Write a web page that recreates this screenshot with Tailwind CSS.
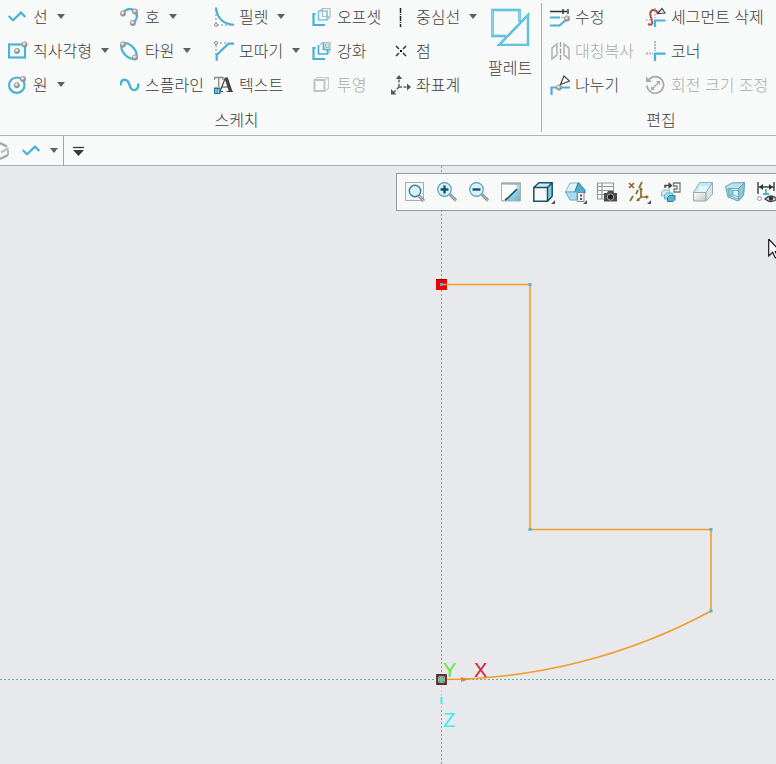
<!DOCTYPE html>
<html lang="ko">
<head>
<meta charset="utf-8">
<title>스케치</title>
<script src="https://cdn.jsdelivr.net/npm/@tailwindcss/browser@4"></script>
</head>
<body class="flex h-screen flex-col overflow-hidden bg-[#e8e9ed] font-['Noto_Sans_CJK_KR',sans-serif] text-[16px] leading-6 font-light text-[#3c3c3c]">
<svg width="0" height="0" class="absolute" aria-hidden="true">
  <defs>
    <radialGradient id="ball" cx=".4" cy=".35"><stop offset="0" stop-color="#fff"/><stop offset="1" stop-color="#8e8e8e"/></radialGradient>
    <linearGradient id="glass" x1="0" y1="0" x2="1" y2="1"><stop offset="0" stop-color="#f0fafd"/><stop offset="1" stop-color="#5fb4d0"/></linearGradient>
    <linearGradient id="gray" x1="0" y1="0" x2="1" y2="1"><stop offset="0" stop-color="#fff"/><stop offset="1" stop-color="#c4c8ca"/></linearGradient>
    <g id="dot"><circle r="2.7" fill="url(#ball)" stroke="#8f8f8f" stroke-width=".6"/></g>
    <g id="more"><path d="M22 18v4h-4z" fill="#555"/></g>
  </defs>
</svg>

<header class="flex shrink-0 border-b border-[#b0b5b8] bg-[#f8faf9]">
  <section class="w-[541px] shrink-0" aria-label="스케치">
    <div class="flex">
      <div class="grid w-[488px] grid-flow-col grid-cols-[112px_94px_98px_79px_97px] grid-rows-[34px_34px_34px] pl-2 whitespace-nowrap [&_span]:pb-0.5">
        <button class="flex items-center gap-[5px]"><svg class="size-5 shrink-0" viewBox="0 0 20 20"><path d="M.7 9 5 13.2 13 5.6 17.4 10" fill="none" stroke="#46b2d6" stroke-width="2.2"/></svg><span>선</span><svg class="ml-1 h-5 w-2 shrink-0" viewBox="0 0 8 20"><path d="M0 7h8l-4 5z" fill="#606060"/></svg></button>
        <button class="flex items-center gap-[5px]"><svg class="size-5 shrink-0" viewBox="0 0 20 20"><rect x="1" y="3.5" width="16" height="13" fill="#f3fafc" stroke="#46b2d6" stroke-width="2.2"/><use href="#dot" x="9" y="10"/><use href="#dot" x="16.5" y="3.5"/></svg><span>직사각형</span><svg class="ml-1 h-5 w-2 shrink-0" viewBox="0 0 8 20"><path d="M0 7h8l-4 5z" fill="#606060"/></svg></button>
        <button class="flex items-center gap-[5px]"><svg class="size-5 shrink-0" viewBox="0 0 20 20"><circle cx="8.8" cy="10.2" r="7.7" fill="none" stroke="#46b2d6" stroke-width="2.2"/><use href="#dot" x="8.8" y="10.2"/><use href="#dot" x="15" y="4"/></svg><span>원</span><svg class="ml-1 h-5 w-2 shrink-0" viewBox="0 0 8 20"><path d="M0 7h8l-4 5z" fill="#606060"/></svg></button>

        <button class="flex items-center gap-[5px]"><svg class="size-5 shrink-0" viewBox="0 0 20 20"><path d="M3 6C6 1.500 12 1 15 4c3.500 4 2 9-2 12" fill="none" stroke="#46b2d6" stroke-width="2.200"/><use href="#dot" x="3" y="6.500"/><use href="#dot" x="15" y="4.500"/><use href="#dot" x="12.800" y="16"/></svg><span>호</span><svg class="ml-1 h-5 w-2 shrink-0" viewBox="0 0 8 20"><path d="M0 7h8l-4 5z" fill="#606060"/></svg></button>
        <button class="flex items-center gap-[5px]"><svg class="size-5 shrink-0" viewBox="0 0 20 20"><ellipse cx="9" cy="10" rx="9.500" ry="5.500" transform="rotate(47 9 10)" fill="none" stroke="#46b2d6" stroke-width="2.200"/><use href="#dot" x="3" y="3.500"/><use href="#dot" x="15" y="16.500"/></svg><span>타원</span><svg class="ml-1 h-5 w-2 shrink-0" viewBox="0 0 8 20"><path d="M0 7h8l-4 5z" fill="#606060"/></svg></button>
        <button class="flex items-center gap-[5px]"><svg class="size-5 shrink-0" viewBox="0 0 20 20"><path d="M.5 10.500C1 3 7.500 3 9.500 10s8.500 7 9-1.500" fill="none" stroke="#46b2d6" stroke-width="2.400"/></svg><span>스플라인</span></button>

        <button class="flex items-center gap-[5px]"><svg class="size-5 shrink-0" viewBox="0 0 20 20"><path d="M2 3v15h16" fill="none" stroke="#888" stroke-dasharray="2 2"/><circle cx="2" cy="18" r="1.500" fill="#fff" stroke="#888"/><path d="M2 .5C3 11 9 17 20 17.800" fill="none" stroke="#46b2d6" stroke-width="2.200"/></svg><span>필렛</span><svg class="ml-1 h-5 w-2 shrink-0" viewBox="0 0 8 20"><path d="M0 7h8l-4 5z" fill="#606060"/></svg></button>
        <button class="flex items-center gap-[5px]"><svg class="size-5 shrink-0" viewBox="0 0 20 20"><path d="M2 14V2h12" fill="none" stroke="#888" stroke-dasharray="2 2"/><circle cx="2" cy="2" r="1.500" fill="#fff" stroke="#888"/><path d="M2.700 19.700V14L14.500 2.700H20" fill="none" stroke="#46b2d6" stroke-width="2.200"/></svg><span>모따기</span><svg class="ml-1 h-5 w-2 shrink-0" viewBox="0 0 8 20"><path d="M0 7h8l-4 5z" fill="#606060"/></svg></button>
        <button class="flex items-center gap-[5px]"><svg class="size-5 shrink-0" viewBox="0 0 20 20"><path d="M.5 5V2.500H9V5M4.700 2.500V12" fill="none" stroke="#888" stroke-width="1.300"/><path d="M6 16.500 11.300 3h2l4.500 13.500M7.500 12h8M4.500 16.500h4.500M12.500 16.500H19" fill="none" stroke="#444" stroke-width="1.200"/><path d="m12 3 4.500 13.500" stroke="#444" stroke-width="3"/><path d="M0 12.500h6.500V19H0z" fill="#1c7899"/><path d="M2 14v4M4.500 14v4M1 15h4.500M1 17h4.500" stroke="#bfe6f2" stroke-width=".7"/></svg><span>텍스트</span></button>

        <button class="flex items-center gap-[5px]"><svg class="size-5 shrink-0" viewBox="0 0 20 20"><path d="M8 4l2.500-2.500H18v8.500l-2.500 2.500M10.500 1.500V9.500H15l3 .5" fill="none" stroke="#b8b8b8" stroke-width="1.200"/><path d="M6.500 4h8.500v9H6.500z" fill="none" stroke="#79cae4" stroke-width="1.700"/><path d="M3.500 7H1.500v11H13" fill="none" stroke="#46b2d6" stroke-width="2.200"/></svg><span>오프셋</span></button>
        <button class="flex items-center gap-[5px]"><svg class="size-5 shrink-0" viewBox="0 0 20 20"><path d="M8 4l2.500-2.500H18v8.500l-2.500 2.500" fill="none" stroke="#b8b8b8" stroke-width="1.200"/><path d="M6.500 4v9h9V8.500h-4V2M11 8.500h7" fill="none" stroke="#46b2d6" stroke-width="1.700"/><path d="M13.500 3H17v3.500h-3.500z" fill="#d5ebf2" stroke="#9abdc9"/><path d="M3.500 7H1.500v11H13" fill="none" stroke="#46b2d6" stroke-width="2.200"/></svg><span>강화</span></button>
        <button disabled class="flex items-center gap-[5px] text-[#aaa]"><svg class="size-5 shrink-0" viewBox="0 0 20 20"><path d="M2.500 5h10v11h-10z" fill="none" stroke="#c2c2c2" stroke-width="2"/><path d="M3 4.500 5.500 2.500h11V13l-3 3M12.500 5l4-2.500" fill="none" stroke="#cecece" stroke-width="1.200"/></svg><span>투영</span></button>

        <button class="flex items-center gap-[5px]"><svg class="size-5 shrink-0" viewBox="0 0 20 20"><path d="M9.500 1v19" stroke="#222" stroke-width="1.500" stroke-dasharray="5 1 1 1"/></svg><span>중심선</span><svg class="ml-1 h-5 w-2 shrink-0" viewBox="0 0 8 20"><path d="M0 7h8l-4 5z" fill="#606060"/></svg></button>
        <button class="flex items-center gap-[5px]"><svg class="size-5 shrink-0" viewBox="0 0 20 20"><path d="m5 5 3 3M15 5l-3 3M5 15l3-3M15 15l-3-3" stroke="#333" stroke-width="1.500"/><path d="M9 9h2v2H9z" fill="#111"/></svg><span>점</span></button>
        <button class="flex items-center gap-[5px]"><svg class="size-5 shrink-0" viewBox="0 0 20 20"><path d="M8 12V3M8 12h9M8 12l-6 6" stroke="#666" stroke-width="1.500" stroke-dasharray="3 1.500"/><path d="M8 0 4.800 4h6.400zM20 12l-4-3.500v7zM0 19.500V14l5.500 5.500z" fill="#555"/></svg><span>좌표계</span></button>
      </div>
      <button class="flex flex-col items-center self-start pt-1.5 leading-[42px] whitespace-nowrap"><svg class="size-10 shrink-0" viewBox="0 0 40 40"><path d="M29.500 16V4H2.500v26H16M38 9v30H9z" fill="none" stroke="#46b2d6" stroke-width="2.400"/><path d="M29.500 16V4H2.500v26H16M38 9v30H9z" fill="none" stroke="#8bdcf1" stroke-width=".8"/></svg><span>팔레트</span></button>
    </div>
    <h2 class="h-[33px] pt-[5px] pr-[68px] text-center font-light">스케치</h2>
  </section>

  <section class="my-[3px] grow border-l border-[#a9adaf]" aria-label="편집">
    <div class="-mt-[3px] grid grid-flow-col grid-cols-[96px_130px] grid-rows-[34px_34px_34px] pl-2 whitespace-nowrap [&_span]:pb-0.5">
      <button class="flex items-center gap-[5px]"><svg class="size-5 shrink-0" viewBox="0 0 20 20"><path d="M0 4.500h17M18 2v5M13 2v5" stroke="#333" stroke-width="1.400"/><path d="M0 10.500h10M0 18.500h9.500l7-6" fill="none" stroke="#46b2d6" stroke-width="2"/><path d="M11 10.500h5" stroke="#999" stroke-dasharray="1.500 1"/><use href="#dot" x="17" y="11.500"/></svg><span>수정</span></button>
      <button disabled class="flex items-center gap-[5px] text-[#aaa]"><svg class="size-5 shrink-0" viewBox="0 0 20 20"><path d="M2 7l5-4v11l-5 4zM19 7l-5-4v11l5 4z" fill="none" stroke="#b8b8b8" stroke-width="1.700"/><path d="M10.500 1v19" stroke="#999" stroke-width="1.300" stroke-dasharray="5 1.500"/></svg><span>대칭복사</span></button>
      <button class="flex items-center gap-[5px]"><svg class="size-5 shrink-0" viewBox="0 0 20 20"><path d="M1.500 20v-7.500H20" fill="none" stroke="#46b2d6" stroke-width="2.200"/><use href="#dot" x="9" y="12.500"/><path d="M10.500 9.500 14 1l5.500 5z" fill="#fff" stroke="#444" stroke-width="1.200"/></svg><span>나누기</span></button>

      <button class="flex items-center gap-[5px]"><svg class="size-5 shrink-0" viewBox="0 0 20 20"><path d="M2 17c4 2 5-1 4-4-2-4-3-9 1-10 3-.5 4 1 5 3" fill="none" stroke="#b64a45" stroke-width="2"/><path d="M0 13h7M9 1v10" stroke="#aaa" stroke-width="1.500" stroke-dasharray="1.500 1.500"/><path d="M9 20v-6.500h10.500" fill="none" stroke="#46b2d6" stroke-width="2.200"/><path d="m11.500 6.500 4.500-5L19 6z" fill="#fff" stroke="#444" stroke-width="1.200"/></svg><span>세그먼트 삭제</span></button>
      <button class="flex items-center gap-[5px]"><svg class="size-5 shrink-0" viewBox="0 0 20 20"><path d="M0 12.500h7M9 0v10" stroke="#b4b4b4" stroke-width="2" stroke-dasharray="2 1"/><path d="M9 20v-7.300h10.500" fill="none" stroke="#46b2d6" stroke-width="2.200"/></svg><span>코너</span></button>
      <button disabled class="flex items-center gap-[5px] text-[#aaa]"><svg class="size-5 shrink-0" viewBox="0 0 20 20"><path d="M3 4.500a8.300 8.300 0 1 1-2 6" fill="none" stroke="#a8a8a8" stroke-width="1.700"/><path d="M0 1.500V7h6zM5 11v4h4zM10 6h4v4z" fill="#a8a8a8"/><path d="m6 14 7-7" stroke="#a8a8a8" stroke-width="1.300"/></svg><span>회전 크기 조정</span></button>
    </div>
    <h2 class="h-[30px] pt-[5px] pl-1 text-center font-light">편집</h2>
  </section>
</header>

<nav class="flex h-[30px] shrink-0 items-stretch border-b border-[#a9b1b5] bg-[#f8faf9]" aria-label="빠른 실행">
  <button class="flex w-[22px] items-center" aria-label="다시 생성"><svg class="size-5" viewBox="0 0 20 20"><path d="M0 2 7 5.500M0 18l8-4" fill="none" stroke="#a5a5a5" stroke-width="2.200"/><path d="M8.500 7 1 11.500" stroke="#c2c2c2" stroke-width="2.500"/><path d="M8 9v5" stroke="#b5b5b5" stroke-width="2"/></svg></button>
  <button class="flex items-center gap-2" aria-label="선"><svg class="size-5" viewBox="0 0 20 20"><path d="M.7 9 5 13.200 13 5.600 17.400 10" fill="none" stroke="#46b2d6" stroke-width="2.200"/></svg><svg class="h-5 w-2" viewBox="0 0 8 20"><path d="M0 7h8l-4 5z" fill="#606060"/></svg></button>
  <button class="ml-[5px] flex items-center border-l border-[#a0a6a9] pl-2" aria-label="도구 모음 사용자 정의"><svg class="h-5 w-3" viewBox="0 0 12 20"><path d="M1 6.500h11" stroke="#3a3a3a" stroke-width="1.300"/><path d="M1 9h11l-5.500 6z" fill="#3a3a3a"/></svg></button>
</nav>

<main class="relative min-h-0 grow overflow-hidden">
  <svg class="size-full" role="img" aria-label="스케치 단면">
    <path d="M441.500 0v2000M0 513.500h4000" stroke="#58b3a2" stroke-dasharray="2 2" fill="none"/>
    <path d="M436 113h11v11h-11z" fill="#f00000"/>
    <path d="M436 113.500h11" stroke="#a40000"/>
    <path d="M441 118.500h89V363.500h181V445A570 570 0 0 1 441 513.500" fill="none" stroke="#f29d2b" stroke-width="1.600"/>
    <path d="M461 511v5l7-2.500z" fill="#e18332"/>
    <path d="M440 117h3v3h-3zM528.500 117h3v3h-3zM528.500 362h3v3h-3zM709.500 362h3v3h-3zM709.500 443.500h3v3h-3z" fill="#4cb8cb"/>
    <path d="M437 509h9v9h-9z" fill="#93aa8d" stroke="#552e37" stroke-width="1.800"/>
    <path d="m438 510 7 7m0-7-7 7" stroke="#bf4148"/>
    <circle cx="441.500" cy="513.500" r="2.500" fill="#69c59c"/>
    <path d="M441.500 520v24" stroke="#6ceced" stroke-dasharray="2 2"/><path d="M441.500 531v7" stroke="#3ce8ef" stroke-width="2"/>
    <g class="font-['Liberation_Sans',sans-serif] text-[20px] font-normal"><text x="443" y="511" fill="#55ec39">Y</text><text x="474" y="511" fill="#d62033">X</text><text x="443" y="561" fill="#3feaf2">Z</text></g>
  </svg>

  <div class="absolute top-[7px] right-0 left-[396px] flex h-[38px] overflow-hidden border-y border-l border-[#96999b] bg-[#f8faf9] pl-0.5" role="toolbar" aria-label="보기">
    <button class="flex w-8 shrink-0 items-center justify-center" aria-label="전체 맞춤"><svg class="size-5 overflow-visible" viewBox="0 0 20 20"><path d="M.5.500h18v18H.5z" fill="#f6f6f6" stroke="#aaa"/><path d="m14 14 5 5" stroke="#858585" stroke-width="3"/><path d="m14 14 5 5" stroke="#ddd"/><circle cx="10" cy="9" r="5.700" fill="#d9f2fa" stroke="#317fa0" stroke-width="1.400"/></svg></button>
    <button class="flex w-8 shrink-0 items-center justify-center" aria-label="확대"><svg class="size-5 overflow-visible" viewBox="0 0 20 20"><path d="m12.500 12 6.500 6.500" stroke="#858585" stroke-width="3"/><path d="m12.500 12 6.500 6.500" stroke="#ddd"/><circle cx="7.500" cy="7.500" r="6.800" fill="#d9f2fa" stroke="#4d9fbd" stroke-width="1.200"/><path d="M7.500 3.500v8M3.500 7.500h8" stroke="#16536a" stroke-width="2.400"/></svg></button>
    <button class="flex w-8 shrink-0 items-center justify-center" aria-label="축소"><svg class="size-5 overflow-visible" viewBox="0 0 20 20"><path d="m12.500 12 6.500 6.500" stroke="#858585" stroke-width="3"/><path d="m12.500 12 6.500 6.500" stroke="#ddd"/><circle cx="7.500" cy="7.500" r="6.800" fill="#d9f2fa" stroke="#4d9fbd" stroke-width="1.200"/><path d="M3.500 7.500h8" stroke="#16536a" stroke-width="2.400"/></svg></button>
    <button class="flex w-8 shrink-0 items-center justify-center" aria-label="다시 그리기"><svg class="size-5 overflow-visible" viewBox="0 0 20 20"><path d="M.5 1h19v18H.5z" fill="url(#glass)" stroke="#a9b0b2"/><path d="M1 3h11q5 0 4 4L5 18H1z" fill="#fbfdfd"/><path d="M0 1.500h20" stroke="#aaa" stroke-width="2"/><path d="m16 7-9 9-3 2" fill="none" stroke="#174f65" stroke-width="1.600"/></svg></button>
    <button class="flex w-8 shrink-0 items-center justify-center" aria-label="표시 스타일"><svg class="size-5 overflow-visible" viewBox="0 0 20 20"><path d="M.8 5.500 6 .800h13.200L14.500 5.500z" fill="#c9edf7"/><path d="M14.500 5.500 19.200.800v13.500l-4.700 4.900z" fill="#8accdf"/><path d="M.8 5.500h13.700v13.700H.8zL6 .800h13.200v13.500l-4.700 4.900M14.500 5.500 19.200.800" fill="none" stroke="#17526a" stroke-width="1.500"/><use href="#more"/></svg></button>
    <button class="flex w-8 shrink-0 items-center justify-center" aria-label="저장된 방향"><svg class="size-5 overflow-visible" viewBox="0 0 20 20"><path d="M5 1h8L9.500 10H.5z" fill="#dff6fb" stroke="#77b8cc"/><path d="M13.500.5 20 8v3H9.500z" fill="#55afcc" stroke="#337f99"/><path d="M.5 10H12v8H5z" fill="#a5ddec" stroke="#69aabf"/><path d="M12.500 10.500h6.500v9h-6.500z" fill="#f5f5f5" stroke="#888"/><path d="M15 12.500h2v2h-2zM15 16h2v2h-2z" fill="#555"/><use href="#more"/></svg></button>
    <button class="flex w-8 shrink-0 items-center justify-center" aria-label="뷰 관리자"><svg class="size-5 overflow-visible" viewBox="0 0 20 20"><path d="M.5 1h16v16H.5zM.500 4.500h16M.5 8.500h16M.500 12.500h16M5 1v16" fill="none" stroke="#999" stroke-width="1.200"/><path d="M7 11h3l1-2h5l1 2h3v8.500H7z" fill="#4c4c4c"/><circle cx="13.500" cy="15" r="3.200" fill="#222" stroke="#aaa"/></svg></button>
    <button class="flex w-8 shrink-0 items-center justify-center" aria-label="데이텀 표시"><svg class="size-5 overflow-visible" viewBox="0 0 20 20"><path d="m0 1 5 5M5 1 0 6M13 0l-3 6M9 8l-2 4M4 14l-3 5M12 15V7M12 15h7M12 15l-4 4" fill="none" stroke="#8a6a2d" stroke-width="1.700"/><path d="m12 5-2 3h4zM20 15l-3-2v4zM8 19v-3l3 3z" fill="#8a6a2d"/><use href="#more"/></svg></button>
    <button class="flex w-8 shrink-0 items-center justify-center" aria-label="스케치 뷰"><svg class="size-5 overflow-visible" viewBox="0 0 20 20"><path d="M4 6V3.500h5" fill="none" stroke="#444" stroke-width="1.500"/><path d="m7.500 0 4 3.500-4 3.500z" fill="#444"/><path d="M12.500 1H19v9h-6V7h3V4h-3.500z" fill="#fff" stroke="#777" stroke-width="1.300"/><path d="m.5 10 2-2h6v4l-2 2h-6z" fill="#ccecf5" stroke="#7fbdd1"/><path d="m3.500 13 2-2h6v4l-2 2h-6z" fill="#a5ddec" stroke="#61aec8"/><path d="m6.500 15.500 2-2h5.500v4l-2 2H6.500z" fill="#55b4d4" stroke="#2f7b97"/></svg></button>
    <button class="flex w-8 shrink-0 items-center justify-center" aria-label="모델 클리핑"><svg class="size-5 overflow-visible" viewBox="0 0 20 20"><path d="M6.500.5h13L15 10.500H.5z" fill="#c4eaf4" stroke="#8bb7c4"/><path d="M7 4h9l-2.500 6H4z" fill="#e3f6fb"/><path d="M.5 10.500H13v8.500H.5z" fill="url(#gray)" stroke="#a3a3a3"/><path d="m13 10.500 6.500-10V12L13 19z" fill="#d4e6eb" stroke="#9aabb0"/></svg></button>
    <button class="flex w-8 shrink-0 items-center justify-center" aria-label="단면"><svg class="size-5 overflow-visible" viewBox="0 0 20 20"><path d="M.5 4.500 7 1l12.500-.5-1 12.500-5.500 6-10-4z" fill="#b9e2ed" stroke="#6aa1b4"/><path d="M3 6.500h10.500V17L4 14z" fill="#dff4fa" stroke="#75b1c4"/><path d="m3 6.500 5 2v4.500l-4 1zM8 8.500h5.500M8 13l5.500 2" fill="#8fc9da" stroke="#6fadc0"/><path d="M13.500 6.500 19.500.500l-1 12.500-5 6z" fill="#8ac9dc" stroke="#6aa1b4"/></svg></button>
    <button class="flex w-8 shrink-0 items-center justify-center" aria-label="치수 표시"><svg class="size-5 overflow-visible" viewBox="0 0 20 20"><path d="M1 0v12M17 0v9M2 5h15" stroke="#444" stroke-width="1.500"/><path d="m2 5 4-3v6zM16 5l-4-3v6z" fill="#333"/><path d="M9 7v5M6 12h6" stroke="#46b2d6" stroke-width="1.800"/><circle cx="2.500" cy="16.500" r="2" fill="#fff" stroke="#999"/><path d="M8 17q6-6 12 0-6 5-12 0z" fill="#ddd" stroke="#444" stroke-width="1.400"/><circle cx="14" cy="16.500" r="2.200" fill="#333"/></svg></button>
  </div>

  <svg class="pointer-events-none absolute top-[73px] left-[768px] h-5 w-3" viewBox="0 0 12 20" aria-hidden="true"><path d="M.7 0v17l4-3.700 2.500 5.500 2.500-1-2.400-5.300h5z" fill="#fff" stroke="#161625" stroke-width="1.200"/></svg>
</main>
</body>
</html>
